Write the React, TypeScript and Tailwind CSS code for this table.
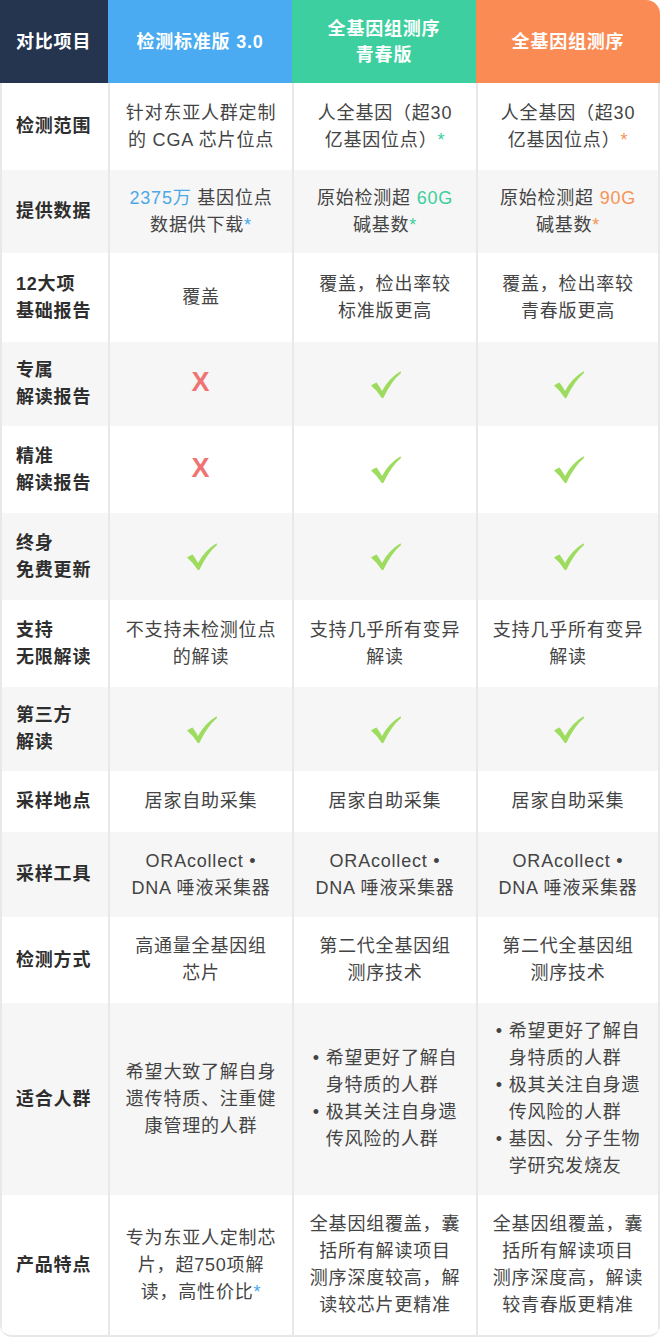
import React from 'react';

const BLUE = 'text-[#4aa8e8]';
const GREEN = 'text-[#3ccf9c]';
const ORANGE = 'text-[#f79358]';

const Check: React.FC = () => (
  <svg width="31" height="29" viewBox="0 0 31 29">
    <path
      d="M1 15.5 Q4 13.2 6.6 12.4 Q9.6 16.5 12 21 Q18.5 8.5 30.5 1.2 L31 3 Q21 11.5 13.6 27.6 Q12.6 28.6 11.6 27.8 Q7.4 20.8 1 15.5 Z"
      fill="#9ddc5f"
    />
  </svg>
);

const Cross: React.FC = () => (
  <span className="text-[27px] font-bold leading-none text-[#f07373]" style={{ fontFamily: '"Liberation Sans", sans-serif' }}>
    X
  </span>
);

const Bullets: React.FC<{ items: string[][] }> = ({ items }) => (
  <div className="flex flex-col text-left">
    {items.map((lines, i) => (
      <div key={i} className="flex">
        <span className="w-[13px] shrink-0">•</span>
        <span>
          {lines.map((l, j) => (
            <React.Fragment key={j}>
              {j > 0 && <br />}
              {l}
            </React.Fragment>
          ))}
        </span>
      </div>
    ))}
  </div>
);

type Row = {
  label: React.ReactNode;
  h: string;
  cells: React.ReactNode[];
};

const rows: Row[] = [
  {
    label: '检测范围',
    h: 'h-[87px]',
    cells: [
      <>针对东亚人群定制<br />的 CGA 芯片位点</>,
      <>人全基因（超30<br />亿基因位点）<span className={GREEN}>*</span></>,
      <>人全基因（超30<br />亿基因位点）<span className={ORANGE}>*</span></>,
    ],
  },
  {
    label: '提供数据',
    h: 'h-[83px]',
    cells: [
      <><span className={BLUE}>2375万</span> 基因位点<br />数据供下载<span className={BLUE}>*</span></>,
      <>原始检测超 <span className={GREEN}>60G</span><br />碱基数<span className={GREEN}>*</span></>,
      <>原始检测超 <span className={ORANGE}>90G</span><br />碱基数<span className={ORANGE}>*</span></>,
    ],
  },
  {
    label: <>12大项<br />基础报告</>,
    h: 'h-[89px]',
    cells: [<>覆盖</>, <>覆盖，检出率较<br />标准版更高</>, <>覆盖，检出率较<br />青春版更高</>],
  },
  { label: <>专属<br />解读报告</>, h: 'h-[84px]', cells: [<Cross />, <Check />, <Check />] },
  { label: <>精准<br />解读报告</>, h: 'h-[87px]', cells: [<Cross />, <Check />, <Check />] },
  { label: <>终身<br />免费更新</>, h: 'h-[87px]', cells: [<Check />, <Check />, <Check />] },
  {
    label: <>支持<br />无限解读</>,
    h: 'h-[87px]',
    cells: [<>不支持未检测位点<br />的解读</>, <>支持几乎所有变异<br />解读</>, <>支持几乎所有变异<br />解读</>],
  },
  { label: <>第三方<br />解读</>, h: 'h-[84px]', cells: [<Check />, <Check />, <Check />] },
  { label: '采样地点', h: 'h-[61px]', cells: [<>居家自助采集</>, <>居家自助采集</>, <>居家自助采集</>] },
  {
    label: '采样工具',
    h: 'h-[85px]',
    cells: [
      <>ORAcollect •<br />DNA 唾液采集器</>,
      <>ORAcollect •<br />DNA 唾液采集器</>,
      <>ORAcollect •<br />DNA 唾液采集器</>,
    ],
  },
  {
    label: '检测方式',
    h: 'h-[86px]',
    cells: [<>高通量全基因组<br />芯片</>, <>第二代全基因组<br />测序技术</>, <>第二代全基因组<br />测序技术</>],
  },
  {
    label: '适合人群',
    h: 'h-[192px]',
    cells: [
      <>希望大致了解自身<br />遗传特质、注重健<br />康管理的人群</>,
      <Bullets items={[['希望更好了解自', '身特质的人群'], ['极其关注自身遗', '传风险的人群']]} />,
      <Bullets
        items={[
          ['希望更好了解自', '身特质的人群'],
          ['极其关注自身遗', '传风险的人群'],
          ['基因、分子生物', '学研究发烧友'],
        ]}
      />,
    ],
  },
  {
    label: '产品特点',
    h: 'h-[140px]',
    cells: [
      <>专为东亚人定制芯<br />片，超750项解<br />读，高性价比<span className={BLUE}>*</span></>,
      <>全基因组覆盖，囊<br />括所有解读项目<br />测序深度较高，解<br />读较芯片更精准</>,
      <>全基因组覆盖，囊<br />括所有解读项目<br />测序深度高，解读<br />较青春版更精准</>,
    ],
  },
];

const App: React.FC = () => {
  return (
    <div
      className="w-[660px] bg-white pb-[6px]"
      style={{ fontFamily: '"Liberation Sans", "Noto Sans CJK SC", sans-serif' }}
    >
      <div className="overflow-hidden rounded-tr-[14px] rounded-b-[12px] border-b-2 border-[#e8e8e8]">
        {/* header */}
        <div className="flex h-[83px] text-[18px] font-bold leading-[26px] tracking-[0.8px] text-white">
          <div className="flex w-[108px] items-center bg-[#25344f] pl-[16px]">对比项目</div>
          <div className="flex w-[184px] items-center justify-center bg-[#4aabf2]">检测标准版 3.0</div>
          <div className="flex w-[184px] items-center justify-center bg-[#3dcf9f] text-center">
            全基因组测序<br />青春版
          </div>
          <div className="flex w-[184px] items-center justify-center bg-[#fb8b55]">全基因组测序</div>
        </div>

        {/* body */}
        <div className="border-x-2 border-[#e8e8e8]">
          {rows.map((row, i) => (
            <div
              key={i}
              className={`flex ${row.h} ${i % 2 === 1 ? 'bg-[#f6f6f6]' : 'bg-white'} text-[18px] leading-[27px] tracking-[0.8px]`}
            >
              <div className="flex w-[106px] items-center pl-[14px] font-bold text-[#2e2e2e]">
                <div>{row.label}</div>
              </div>
              {row.cells.map((c, j) => (
                <div
                  key={j}
                  className={`flex items-center justify-center border-l-2 border-[#e8e8e8] text-center text-[#444444] ${
                    j === 2 ? 'w-[182px]' : 'w-[184px]'
                  }`}
                >
                  <div>{c}</div>
                </div>
              ))}
            </div>
          ))}
        </div>
      </div>
    </div>
  );
};

export default App;
